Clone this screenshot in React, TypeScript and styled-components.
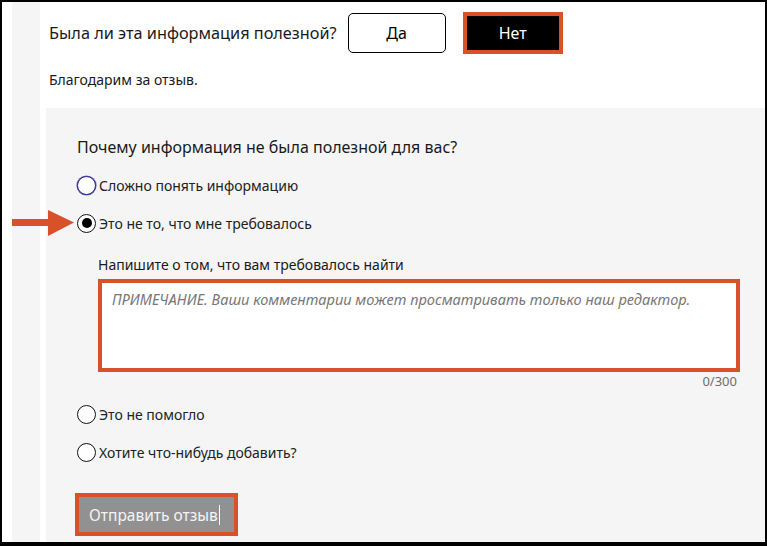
import React from "react";
import styled, { createGlobalStyle } from "styled-components";

const ORANGE = "#d9512b";

const Global = createGlobalStyle`
  html, body { margin: 0; padding: 0; background: #fff; }
  body { font-family: "Noto Sans", "Open Sans", sans-serif; color: #1a1a1a; }
  * { box-sizing: border-box; }
`;

const Frame = styled.div`
  width: 767px;
  height: 546px;
  border: 2px solid #000;
  border-bottom-width: 4px;
  background: #fff;
  display: grid;
  grid-template-columns: 10px 28px 1fr;
  overflow: hidden;
`;

const Gutter = styled.div`
  background: #f5f5f5;
`;

const Main = styled.div`
  position: relative;
  display: flex;
  flex-direction: column;
  min-width: 0;
`;

const Header = styled.div`
  padding: 10px 0 0 9px;
`;

const QuestionRow = styled.div`
  display: flex;
  align-items: center;
  height: 42px;
`;

const Question = styled.span`
  font-size: 16.3px;
  margin-right: 11px;
`;

const VoteButton = styled.button<{ $active?: boolean }>`
  font-family: inherit;
  font-size: 16px;
  cursor: pointer;
  ${(p) =>
    p.$active
      ? `
    width: 100px; height: 42px; margin-left: 17px;
    background: #000; color: #fff;
    border: 4px solid ${ORANGE}; border-radius: 0;
  `
      : `
    width: 98px; height: 40px;
    background: #fff; color: #000;
    border: 1px solid #000; border-radius: 5px;
  `}
`;

const Thanks = styled.p`
  margin: 18px 0 0;
  font-size: 14px;
  line-height: 16px;
`;

const Panel = styled.div`
  margin: 20px 0 0 6px;
  flex: 1;
  background: #f5f5f5;
  padding: 28px 0 0 31px;
`;

const PanelTitle = styled.h2`
  margin: 0 0 8px;
  font-size: 16px;
  font-weight: 400;
  line-height: 22px;
`;

const Option = styled.label`
  display: flex;
  align-items: center;
  height: 38px;
  font-size: 14px;
  color: #222;
`;

const Radio = styled.span<{ $checked?: boolean; $focus?: boolean }>`
  width: 19px;
  height: 19px;
  border-radius: 50%;
  border: 1.6px solid ${(p) => (p.$focus ? "#2a2470" : "#111")};
  box-shadow: ${(p) => (p.$focus ? "0 0 0 0.6px #6a63c9" : "none")};
  background: #fff;
  margin-right: 3px;
  display: flex;
  align-items: center;
  justify-content: center;
  flex-shrink: 0;
  &::after {
    content: "";
    display: ${(p) => (p.$checked ? "block" : "none")};
    width: 10px;
    height: 10px;
    border-radius: 50%;
    background: #000;
  }
`;

const Detail = styled.div`
  padding: 14px 25px 0 21px;
`;

const DetailLabel = styled.div`
  font-size: 14px;
  line-height: 18px;
  margin-bottom: 5px;
`;

const TextArea = styled.div`
  height: 93px;
  background: #fff;
  border: 4px solid ${ORANGE};
  padding: 6px 10px;
  font-size: 14.6px;
  font-style: italic;
  color: #777;
`;

const Counter = styled.div`
  text-align: right;
  font-size: 13px;
  line-height: 18px;
  color: #6e6e6e;
  padding-right: 3px;
  margin-bottom: 5px;
`;

const SubmitWrap = styled.div`
  margin: 22px 0 0 -2px;
`;

const Submit = styled.button`
  display: inline-flex;
  align-items: center;
  height: 43px;
  width: 163px;
  padding: 0 0 0 10px;
  background: #919191;
  border: 4px solid ${ORANGE};
  color: #f4f4f4;
  font-family: inherit;
  font-size: 15.5px;
  cursor: pointer;
`;

const Caret = styled.span`
  display: inline-block;
  width: 1px;
  height: 20px;
  background: #fff;
  margin-left: 1px;
`;

const Arrow = styled.svg`
  position: absolute;
  left: -28px;
  top: 207px;
`;

export default function App() {
  return (
    <>
      <Global />
      <Frame>
        <div />
        <Gutter />
        <Main>
          <Header>
            <QuestionRow>
              <Question>Была ли эта информация полезной?</Question>
              <VoteButton>Да</VoteButton>
              <VoteButton $active>Нет</VoteButton>
            </QuestionRow>
            <Thanks>Благодарим за отзыв.</Thanks>
          </Header>
          <Panel>
            <PanelTitle>Почему информация не была полезной для вас?</PanelTitle>
            <Option>
              <Radio $focus />
              Сложно понять информацию
            </Option>
            <Option>
              <Radio $checked />
              Это не то, что мне требовалось
            </Option>
            <Detail>
              <DetailLabel>Напишите о том, что вам требовалось найти</DetailLabel>
              <TextArea>ПРИМЕЧАНИЕ. Ваши комментарии может просматривать только наш редактор.</TextArea>
              <Counter>0/300</Counter>
            </Detail>
            <Option>
              <Radio />
              Это не помогло
            </Option>
            <Option>
              <Radio />
              Хотите что-нибудь добавить?
            </Option>
            <SubmitWrap>
              <Submit>
                Отправить отзыв
                <Caret />
              </Submit>
            </SubmitWrap>
          </Panel>
          <Arrow width="62" height="28" viewBox="0 0 62 28">
            <rect x="0" y="10" width="40" height="7" fill={ORANGE} />
            <polygon points="36,1 62,13.5 36,27" fill={ORANGE} />
          </Arrow>
        </Main>
      </Frame>
    </>
  );
}
